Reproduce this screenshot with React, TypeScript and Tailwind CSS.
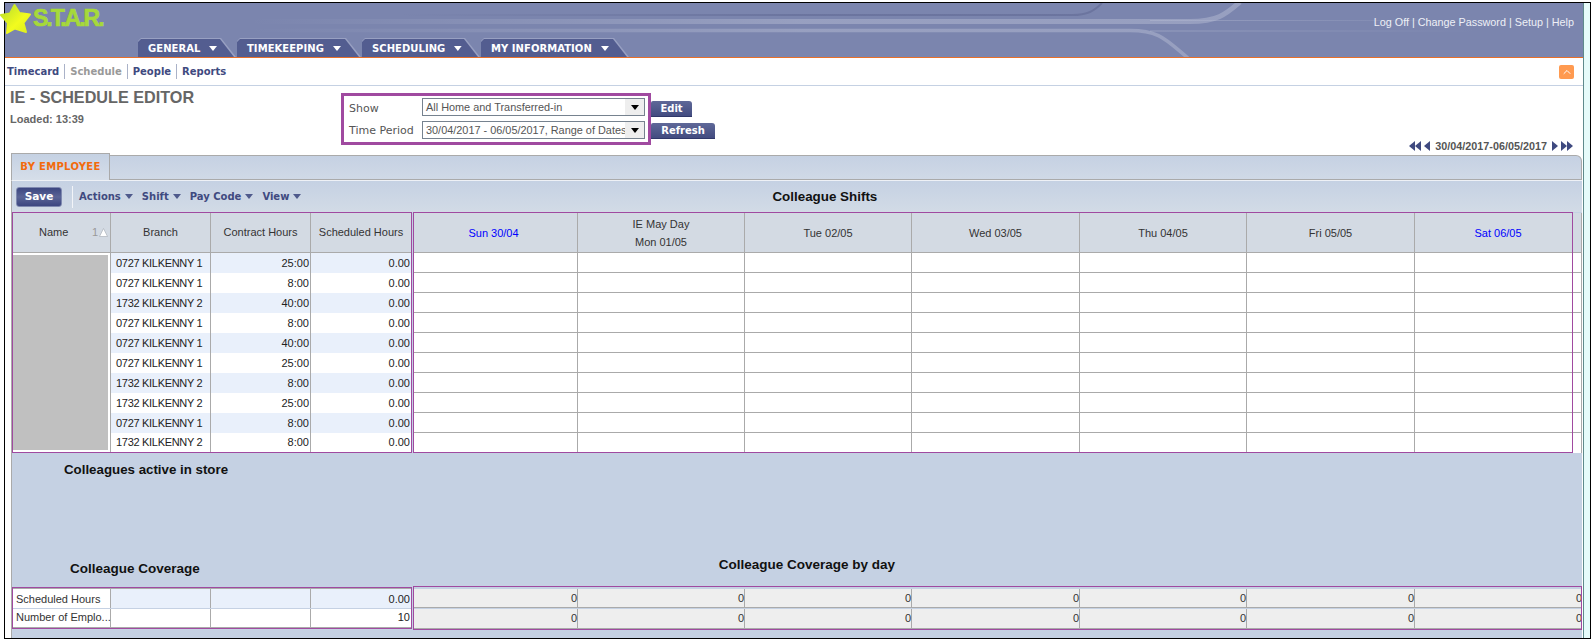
import React from "react";
import { ChevronUp } from "lucide-react";

const employees = [
  ["0727 KILKENNY 1", "25:00"],
  ["0727 KILKENNY 1", "8:00"],
  ["1732 KILKENNY 2", "40:00"],
  ["0727 KILKENNY 1", "8:00"],
  ["0727 KILKENNY 1", "40:00"],
  ["0727 KILKENNY 1", "25:00"],
  ["1732 KILKENNY 2", "8:00"],
  ["1732 KILKENNY 2", "25:00"],
  ["0727 KILKENNY 1", "8:00"],
  ["1732 KILKENNY 2", "8:00"],
];

const dayCols = "grid grid-cols-[165px_167px_167px_168px_167px_168px_167px]";
const hourCols = "grid grid-cols-[98px_100px_100px_100px]";
const line = "border-[#aaaaaa]";

function Caret({ className }: { className: string }) {
  return (
    <svg width="8" height="5" viewBox="0 0 8 5" className={className}>
      <polygon points="0,0 8,0 4,5" fill="currentColor" />
    </svg>
  );
}

function NavTab({ label, width }: { label: string; width: string }) {
  return (
    <div className={`${width} h-[19px] bg-[#98a0c2] pt-px [clip-path:polygon(0_3px,3px_0,calc(100%-15px)_0,100%_100%,0_100%)]`}>
      <div className="h-full bg-[#535d90] pl-[10px] pr-[18px] flex items-center text-white font-bold text-[10px] tracking-[0.05px] [clip-path:polygon(0_3px,3px_0,calc(100%-16px)_0,calc(100%-2px)_100%,0_100%)]">
        <span>{label}</span>
        <Caret className="ml-[9px] text-white" />
      </div>
    </div>
  );
}

function Select({ value }: { value: string }) {
  return (
    <div className="w-[223px] h-[18px] border border-[#76828f] bg-white flex items-center font-['Liberation_Sans',sans-serif] text-[10.9px] text-[#555555]">
      <span className="pl-[3px] flex-1 whitespace-nowrap overflow-hidden">{value}</span>
      <div className="w-[19px] h-full bg-[#eeeeee] flex items-center justify-center">
        <Caret className="text-black" />
      </div>
    </div>
  );
}

function BlueButton({ label, className }: { label: string; className: string }) {
  return (
    <div className={`h-[16px] rounded-tr-[3px] rounded-tl-[2px] bg-gradient-to-b from-[#5f6898] to-[#434c80] border-b border-[#30386a] text-white font-bold text-[10px] flex items-center justify-center ${className}`}>
      {label}
    </div>
  );
}

function MenuItem({ label, className }: { label: string; className: string }) {
  return (
    <div className={`flex items-center gap-[4px] text-[#3f4a80] font-bold text-[10px] ${className}`}>
      <span>{label}</span>
      <Caret className="text-[#4f5a8c]" />
    </div>
  );
}

function PagerArrow({ flip }: { flip?: boolean }) {
  return (
    <svg width="6" height="10" viewBox="0 0 6 10" className={flip ? "rotate-180" : ""}>
      <polygon points="6,0 6,10 0,5" fill="#3f4a80" />
    </svg>
  );
}

function Header() {
  return (
    <div className="relative h-[55px] bg-[#7b85ae] border-b border-[#e8702a] flex flex-col justify-between">
      <svg className="absolute left-0 top-0" width="1579" height="54" viewBox="5 3 1579 54" fill="none">
        <defs>
          <linearGradient id="fadeIn" gradientUnits="userSpaceOnUse" x1="250" y1="0" x2="800" y2="0">
            <stop offset="0" stopColor="#b4bad2" stopOpacity="0" />
            <stop offset="1" stopColor="#b4bad2" stopOpacity="0.5" />
          </linearGradient>
          <linearGradient id="fadeDark" gradientUnits="userSpaceOnUse" x1="400" y1="0" x2="800" y2="0">
            <stop offset="0" stopColor="#545c88" stopOpacity="0" />
            <stop offset="1" stopColor="#545c88" stopOpacity="0.4" />
          </linearGradient>
          <linearGradient id="fadeOut" gradientUnits="userSpaceOnUse" x1="1150" y1="0" x2="1480" y2="0">
            <stop offset="0" stopColor="#b4bad2" stopOpacity="0.5" />
            <stop offset="1" stopColor="#b4bad2" stopOpacity="0" />
          </linearGradient>
        </defs>
        <path d="M400 15H1072C1088 15 1094 11 1102 3" stroke="url(#fadeDark)" strokeWidth="2" />
        <path d="M250 21.5H1190C1218 21.5 1226 14 1240 2" stroke="url(#fadeIn)" strokeWidth="5" />
        <path d="M250 30.5H1130C1160 30.5 1166 40 1188 58" stroke="url(#fadeIn)" strokeWidth="3.5" />
        <path d="M1150 20.5H1500" stroke="url(#fadeOut)" />
        <path d="M1150 31H1500" stroke="url(#fadeOut)" />
      </svg>
      <div className="relative flex justify-between items-start">
        <span className="pl-[28px] pt-[1px] text-[23px] leading-[28px] font-bold text-[#a6d93a] tracking-[-2px] [-webkit-text-stroke:0.7px_#a6d93a]">S.T.A.R.</span>
        <span className="pt-[12px] pr-[9px] text-[10.8px] leading-[14px] text-[#eef0f6]">Log Off | Change Password | Setup | Help</span>
      </div>
      <div className="relative flex gap-[1px] pl-[133px] font-['DejaVu_Sans',sans-serif]">
        <NavTab label="GENERAL" width="w-[98px]" />
        <NavTab label="TIMEKEEPING" width="w-[124px]" />
        <NavTab label="SCHEDULING" width="w-[118px]" />
        <NavTab label="MY INFORMATION" width="w-[148px]" />
      </div>
    </div>
  );
}

function SubNav() {
  return (
    <div className="h-[28px] border-b border-[#c5d1e3] flex items-center pl-[2px] pr-[9px] font-['DejaVu_Sans',sans-serif] text-[10px] font-bold text-[#3f4a80]">
      <span className="pr-[5px] border-r border-[#aab2c8]">Timecard</span>
      <span className="px-[5px] border-r border-[#aab2c8] text-[#999999]">Schedule</span>
      <span className="px-[5px] border-r border-[#aab2c8]">People</span>
      <span className="pl-[5px]">Reports</span>
      <div className="ml-auto w-[15px] h-[14px] rounded-[2px] bg-[#ff9a50] flex items-center justify-center">
        <ChevronUp size={12} className="text-white" />
      </div>
    </div>
  );
}

function TitleBar() {
  return (
    <div className="h-[67px] flex">
      <div className="w-[336px] pl-[5px] pt-[1px]">
        <div className="text-[16.2px] leading-[20px] font-bold text-[#666666]">IE - SCHEDULE EDITOR</div>
        <div className="mt-[5px] text-[11px] leading-[14px] font-bold text-[#666666]">Loaded: 13:39</div>
      </div>
      <div className="mt-[7px] w-[310px] h-[52px] border-[3px] border-[#a04aa0] pl-[5px] pr-[3px] pt-[2px] font-['DejaVu_Sans',sans-serif]">
        <div className="flex items-center">
          <span className="w-[73px] translate-y-[2px] text-[11px] text-[#555555]">Show</span>
          <Select value="All Home and Transferred-in" />
        </div>
        <div className="flex items-center mt-[5px]">
          <span className="w-[73px] translate-y-[1px] text-[11px] text-[#555555] whitespace-nowrap">Time Period</span>
          <Select value="30/04/2017 - 06/05/2017, Range of Dates" />
        </div>
      </div>
      <div className="pt-[15px] font-['DejaVu_Sans',sans-serif]">
        <BlueButton label="Edit" className="w-[41px]" />
        <BlueButton label="Refresh" className="w-[64px] mt-[6px]" />
      </div>
      <div className="ml-auto self-end -mb-px mr-[10px] flex items-center gap-[3px] text-[10.8px] font-bold text-[#555555]">
        <span className="flex"><PagerArrow /><PagerArrow /></span>
        <PagerArrow />
        <span className="px-[2px]">30/04/2017-06/05/2017</span>
        <PagerArrow flip />
        <span className="flex"><PagerArrow flip /><PagerArrow flip /></span>
      </div>
    </div>
  );
}

function Toolbar() {
  return (
    <div className="h-[31px] bg-gradient-to-b from-[#c5d1e3] to-[#d2dbe6] flex items-center pl-[4px] font-['DejaVu_Sans',sans-serif]">
      <div className="w-[46px] h-[20px] rounded-[3px] border border-[#7f89b0] bg-gradient-to-b from-[#3c4680] via-[#5a6496] to-[#3c4680] text-white text-[10.5px] font-bold flex items-center justify-center">Save</div>
      <div className="ml-[10px] w-px h-[22px] bg-[#f2f4f8]" />
      <MenuItem label="Actions" className="ml-[6px]" />
      <MenuItem label="Shift" className="ml-[9px]" />
      <MenuItem label="Pay Code" className="ml-[9px]" />
      <MenuItem label="View" className="ml-[9px]" />
      <span className="ml-[471px] translate-y-px text-[13.4px] font-bold text-[#111111] font-['Liberation_Sans',sans-serif]">Colleague Shifts</span>
    </div>
  );
}

function HoursTable() {
  const head = `h-[40px] border-b border-r ${line} bg-[#d3dae3] text-[#333333] flex items-center justify-center`;
  return (
    <div className={`w-[400px] border border-[#a04aa0] ${hourCols} text-[11px] text-[#222222]`}>
      <div className={`${head} !justify-between pl-[26px] pr-[2px]`}>
        <span>Name</span>
        <span className="flex items-center gap-[1px] text-[#999999]">
          1
          <svg width="9" height="9" viewBox="0 0 9 9"><polygon points="4.5,0.5 8.5,8.5 0.5,8.5" fill="#ffffff" stroke="#aeb2ba" strokeWidth="0.7" /></svg>
        </span>
      </div>
      <div className={head}>Branch</div>
      <div className={head}>Contract Hours</div>
      <div className={`${head} !border-r-0`}>Scheduled Hours</div>
      <div className={`row-span-10 border-r ${line} pt-[2px] pb-[2px] pr-[2px] bg-white`}>
        <div className="h-full bg-[#c0c0c0]" />
      </div>
      {employees.map(([branch, contract], i) => {
        const zebra = i % 2 === 0 ? "bg-[#e9f0fb]" : "bg-white";
        const size = i === 9 ? "h-[19px]" : "h-[20px]";
        return (
          <React.Fragment key={i}>
            <div className={`${size} ${zebra} border-r ${line} pl-[5px] flex items-center tracking-[-0.3px]`}>{branch}</div>
            <div className={`${size} ${zebra} border-r ${line} pr-[1px] flex items-center justify-end`}>{contract}</div>
            <div className={`${size} ${zebra} pr-[1px] flex items-center justify-end`}>0.00</div>
          </React.Fragment>
        );
      })}
    </div>
  );
}

function DaysTable() {
  const days = ["Sun 30/04", "Mon 01/05", "Tue 02/05", "Wed 03/05", "Thu 04/05", "Fri 05/05", "Sat 06/05"];
  return (
    <div className={`relative w-[1169px] pt-px ${dayCols} text-[11px] text-[#333333]`}>
      {days.map((day, i) => (
        <div key={day} className={`h-[40px] border-b border-r ${line} bg-[#d3dae3] flex flex-col items-center justify-center ${i === 0 ? "pr-[3px]" : ""} ${i === 0 || i === 6 ? "text-[#0000ff]" : ""}`}>
          {i === 1 && <span className="leading-[18px]">IE May Day</span>}
          <span className="leading-[18px]">{day}</span>
        </div>
      ))}
      {employees.map((_, r) =>
        days.map((day) => (
          <div key={`${r}${day}`} className={`${r === 9 ? "h-[20px]" : "h-[20px] border-b"} border-r ${line} bg-white`} />
        ))
      )}
      <div className="absolute left-0 top-0 w-[1160px] h-full border border-[#a04aa0] pointer-events-none" />
    </div>
  );
}

function SummaryRows() {
  return (
    <div className="flex gap-px items-start text-[11px] text-[#222222]">
      <div className={`w-[400px] h-[42px] border border-[#a04aa0] ${hourCols}`}>
        <div className="col-span-4 h-[1px] bg-[#aaaaaa]" />
        {[["Scheduled Hours", "0.00"], ["Number of Emplo...", "10"]].map(([label, value], i) => {
          const zebra = i === 0 ? "bg-[#e9f0fb]" : "bg-white";
          const tall = i === 0 ? "h-[19px]" : "h-[19px] border-b";
          return (
            <React.Fragment key={label}>
              <div className={`${tall} bg-white border-r ${line} pl-[3px] flex items-center whitespace-nowrap text-[#333333]`}>{label}</div>
              <div className={`${tall} ${zebra} border-r ${line}`} />
              <div className={`${tall} ${zebra} border-r ${line}`} />
              <div className={`${tall} ${zebra} ${line} pr-[1px] flex items-center justify-end`}>{value}</div>
            </React.Fragment>
          );
        })}
      </div>
      <div className="relative -mt-px w-[1169px] h-[44px] pt-[3px] grid grid-cols-[165px_167px_167px_168px_167px_168px_167px]">
        {[0, 1].map((r) =>
          [0, 1, 2, 3, 4, 5, 6].map((c) => (
            <div key={`${r}-${c}`} className={`${r === 0 ? "h-[19px]" : "h-[20px]"} border-b ${c < 6 ? "border-r" : ""} ${line} bg-[#eeeeee] flex items-center justify-end text-[#333333]`}>0</div>
          ))
        )}
        <div className="absolute inset-0 border border-[#a04aa0] pointer-events-none" />
      </div>
    </div>
  );
}

export default function App() {
  return (
    <div className="w-[1593px] h-[641px] bg-white pl-[4px] pt-[2px] font-['Liberation_Sans',Arial,sans-serif] overflow-hidden">
      <div className="relative w-[1587px] h-[637px] border border-black flex bg-[#e6fbfa]">
        {/* star sits over the frame line in the original */}
        <svg className="absolute -left-[5px] top-0 z-10" width="33" height="32" viewBox="0 0 33 32">
          <defs>
            <linearGradient id="star" x1="0" y1="0" x2="1" y2="1">
              <stop offset="0" stopColor="#b5dc2e" />
              <stop offset="0.6" stopColor="#f2fb1e" />
              <stop offset="1" stopColor="#d8ec20" />
            </linearGradient>
          </defs>
          <polygon points="14.5,2 19.5,10 30,11.5 23.5,20 26,29 15,25.5 7,30 8,20 1,12 10,10.5" fill="url(#star)" stroke="url(#star)" strokeWidth="2" strokeLinejoin="round" />
        </svg>
        <div className="w-[1579px] h-full border-r border-[#5f8a8c] bg-white flex flex-col">
          <Header />
          <SubNav />
          <TitleBar />
          <div className="ml-[6px] w-[1571px] flex-1 flex flex-col">
            <div className="h-[27px] flex items-stretch">
              <div className={`w-[99px] pb-[2px] border border-b-0 ${line} bg-gradient-to-b from-[#c5d1e3] to-[#d6dee9] flex items-center justify-center font-['DejaVu_Sans',sans-serif] text-[10px] font-bold tracking-[0.3px] text-[#f26a0c]`}>BY EMPLOYEE</div>
              <div className={`flex-1 mt-[2px] border-t border-r border-b ${line} rounded-tr-[6px] bg-gradient-to-b from-[#c5d1e3] to-[#d0d9e6]`} />
            </div>
            <div className={`flex-1 flex flex-col border-l border-t ${line} border-t-[#eef1f6] bg-[#c5d1e3]`}>
              <Toolbar />
              <div className="flex gap-px">
                <HoursTable />
                <DaysTable />
              </div>
              <div className="flex-1 flex flex-col justify-between font-bold text-[#111111]">
                <div className="pl-[52px] pt-[9px] leading-[16px] text-[13.3px]">Colleagues active in store</div>
                <div className="flex items-end pb-[10px] leading-[16px] text-[13.5px]">
                  <span className="pl-[58px]">Colleague Coverage</span>
                  <span className="ml-[519px] -translate-y-[4px]">Colleague Coverage by day</span>
                </div>
              </div>
              <SummaryRows />
              <div className="h-[8px]" />
            </div>
          </div>
        </div>
      </div>
    </div>
  );
}
